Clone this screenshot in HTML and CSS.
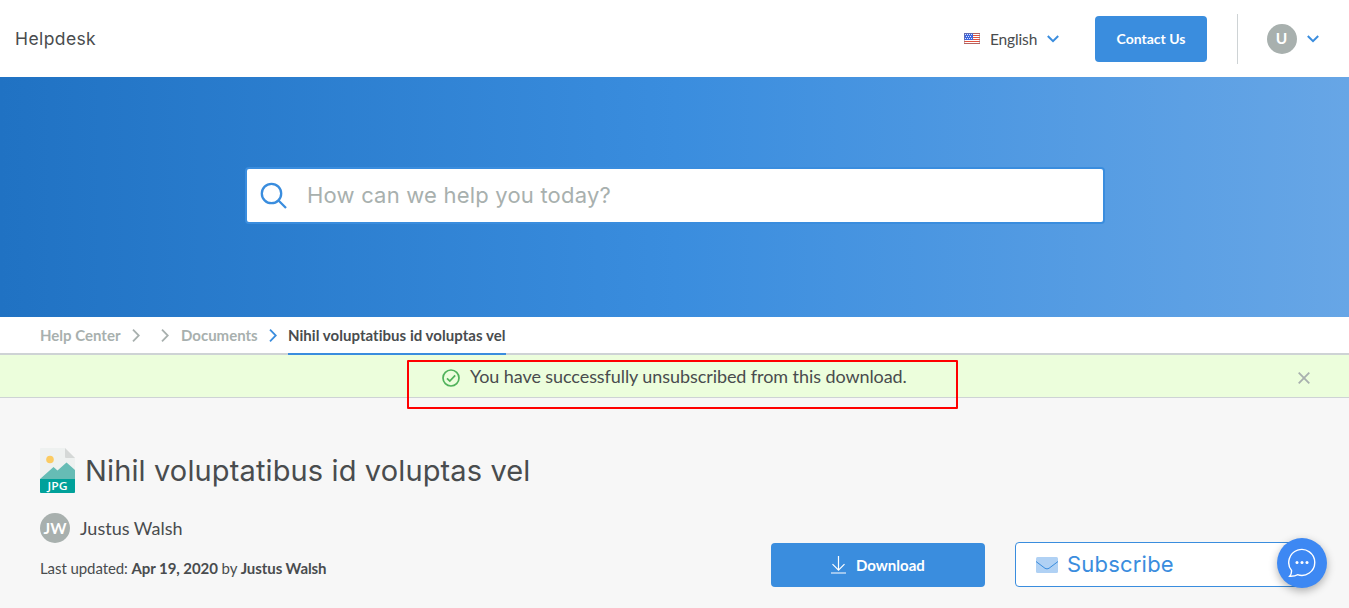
FILE: index.html
```html
<!DOCTYPE html>
<html lang="en">
<head>
<meta charset="utf-8">
<title>Helpdesk</title>
<link rel="stylesheet" href="styles.css">
</head>
<body>
<header class="topbar">
  <div class="brand">Helpdesk</div>
  <nav class="topnav">
    <div class="language">
      <svg class="flag" viewBox="0 0 16 11"><path fill="#fff" d="M0 0h16v11H0z"/><path stroke="#e0523f" d="M0 .5h16M0 2.500h16M0 4.500h16M0 6.500h16M0 8.500h16M0 10.500h16"/><path fill="#3d66df" d="M0 0h9v7H0z"/><path stroke="#dce6ff" stroke-dasharray="1 1" d="M1 1.500h7M2 3.500h6M1 5.500h7"/><path fill="none" stroke="#8c7181" stroke-opacity=".5" d="M.5.5h15v10H.5z"/></svg>
      <span>English</span>
      <svg class="chevron" viewBox="0 0 12 8"><path d="M.8 1 6 6.200 11.200 1"/></svg>
    </div>
    <a class="contact">Contact Us</a>
    <div class="account">
      <span class="avatar user">U</span>
      <svg class="chevron" viewBox="0 0 12 8"><path d="M.8 1 6 6.200 11.200 1"/></svg>
    </div>
  </nav>
</header>
<section class="hero">
  <div class="search">
    <svg class="search-icon" viewBox="0 0 28 28"><circle cx="11.500" cy="11.500" r="9.700"/><path d="m18.500 18.500 7.500 7.500"/></svg>
    <span class="prompt">How can we help you today?</span>
  </div>
</section>
<nav class="crumbs">
  <a class="crumb first">Help Center</a>
  <svg class="sep a" viewBox="0 0 8 13"><path d="m1 .7 5.800 5.800L1 12.300"/></svg>
  <svg class="sep b" viewBox="0 0 8 13"><path d="m1 .7 5.800 5.800L1 12.300"/></svg>
  <a class="crumb second">Documents</a>
  <svg class="sep c" viewBox="0 0 8 13"><path d="m1 .7 5.800 5.800L1 12.300"/></svg>
  <span class="crumb current">Nihil voluptatibus id voluptas vel</span>
</nav>
<div class="notice">
  <svg class="tick" viewBox="0 0 18 18"><circle cx="9" cy="9" r="8"/><path d="m5 9.300 2.800 2.800L13.200 6.300"/></svg>
  <span class="message">You have successfully unsubscribed from this download.</span>
  <svg class="close" viewBox="0 0 12 12"><path d="m.7.7 10.600 10.600M11.300.7.7 11.300"/></svg>
  <div class="highlight"></div>
</div>
<main class="document">
  <div class="heading">
    <svg class="file" viewBox="0 0 35 45"><path fill="#eef1f0" d="M0 1q0-1 1-1h24l10 10v21H0z"/><path fill="#d5d8d7" d="M25 0v9q0 1 1 1h9z"/><circle cx="10" cy="11.500" r="3.800" fill="#fbcb62"/><path fill="#66bcb5" d="m0 31 13.500-12 4 3.500 9-8 8.500 7.500v9z"/><path fill="#00a19a" d="M0 31h35v13q0 1-1 1H1q-1 0-1-1z"/><text class="ext" x="7.500" y="42" textLength="20" lengthAdjust="spacingAndGlyphs">JPG</text></svg>
    <h1>Nihil voluptatibus id voluptas vel</h1>
  </div>
  <div class="lower">
    <div class="meta">
      <div class="author"><span class="avatar initials">JW</span><span class="name">Justus Walsh</span></div>
      <p class="updated">Last updated: <b>Apr 19, 2020</b> by <b>Justus Walsh</b></p>
    </div>
    <a class="download">
      <svg class="down" viewBox="0 0 15 18"><path d="M7.500 0v14M1.500 8.200l6 6 6-6M0 17h15"/></svg>
      <span>Download</span>
    </a>
    <a class="subscribe">
      <svg class="mail" viewBox="0 0 22 16"><rect width="22" height="16" rx="1.500" fill="#b0d1f4"/><path fill="none" stroke="#3a8dde" d="m0 4.500 9 6.800q2 1.200 4 0l9-6.800"/></svg>
      <span>Subscribe</span>
    </a>
  </div>
</main>
<div class="chat">
  <svg class="bubble" viewBox="0 0 28 30"><path d="M1.700 28.300Q3.800 26 3.500 22.400A13 13 0 1 1 9.500 26.700Q7 28.500 1.700 28.300Z"/><g><circle cx="9" cy="14.500" r="1.500"/><circle cx="14" cy="14.500" r="1.500"/><circle cx="19" cy="14.500" r="1.500"/></g></svg>
</div>
</body>
</html>
```
FILE: styles.css
```css
* { box-sizing: border-box; }
body { margin: 0; height: 608px; overflow: hidden; background: #f7f7f7; color: #494c4e; font: 15px/20px Lato, sans-serif; font-variant-ligatures: none; }
svg { display: block; flex: none; }
span, a { white-space: nowrap; }
.topbar { height: 77px; background: #fff; display: flex; justify-content: space-between; align-items: center; padding-left: 15px; }
.brand { font: 17.500px/24px Inter, sans-serif; letter-spacing: .4px; }
.topnav { display: flex; align-items: center; height: 77px; }
.language { display: flex; align-items: center; width: 131px; }
.flag { width: 16px; height: 11px; margin-right: 10px; }
.language span { width: 47px; font-size: 15.500px; letter-spacing: -.15px; padding-top: 1px; }
.chevron { width: 12px; height: 8px; fill: none; stroke: #3a8dde; stroke-width: 2; margin-left: 10px; }
.contact { width: 112px; height: 46px; border-radius: 4px; background: #3a8dde; color: #fff; font-weight: 700; font-size: 14px; display: flex; align-items: center; justify-content: center; }
.account { display: flex; align-items: center; width: 112px; height: 50px; margin-left: 30px; padding-left: 29px; border-left: 1px solid #ced3d5; }
.avatar { display: flex; align-items: center; justify-content: center; width: 30px; height: 30px; border-radius: 50%; background: #a8b0ae; color: #fff; font-weight: 700; font-size: 15.500px; }
.user { padding: 0 1px 1px 0; }
.initials { padding-bottom: 1px; }
.hero { height: 240px; padding-top: 90px; background: linear-gradient(90deg, #2072c3 0%, #3a8dde 50%, #67a6e6 100%); }
.search { width: 860px; height: 57px; margin: 0 auto 0 245px; border: 2px solid #3a8dde; border-radius: 4px; background: #fff; display: flex; align-items: center; padding-left: 13px; }
.search-icon { width: 28px; height: 28px; fill: none; stroke: #3a8dde; stroke-width: 2.300; }
.prompt { font: 22px/30px Inter, sans-serif; letter-spacing: .2px; color: #a8b0ae; margin: -2px 0 0 19px; }
.crumbs { height: 38px; background: #fff; border-bottom: 2px solid #ced3d5; display: flex; align-items: flex-start; padding-left: 40px; }
.crumb { height: 38px; padding-top: 8px; font-weight: 700; color: #a8b0ae; }
.first { width: 81px; }
.second { width: 77px; }
.current { width: 218px; color: #494c4e; border-bottom: 2px solid #3a8dde; letter-spacing: .04px; }
.sep { width: 8px; height: 13px; margin-top: 12px; fill: none; stroke: #a8b0ae; stroke-width: 1.800; }
.a { margin-left: 11px; }
.b { margin: 12px 12px 0 21px; }
.c { margin: 12px 11px 0 11px; stroke: #3a8dde; }
.notice { position: relative; height: 43px; background: #ecfedc; border-bottom: 1px solid #ced3d5; display: flex; align-items: center; padding: 2px 39px 0 442px; }
.tick { width: 18px; height: 18px; fill: none; stroke: #50b25b; stroke-width: 1.700; margin-top: 2px; }
.message { font-size: 18px; line-height: 24px; letter-spacing: -.08px; margin: -3px 0 0 10px; }
.close { width: 12px; height: 12px; margin-left: auto; stroke: #a8b0ae; stroke-width: 1.800; margin-top: 2px; }
.highlight { position: absolute; left: 407px; top: 5px; width: 551px; height: 49px; border: 2px solid #f00; border-radius: 1px; z-index: 2; }
.document { padding: 50px 40px 0; }
.heading { display: flex; height: 45px; }
.file { width: 35px; height: 45px; }
.ext { font: 600 10.500px "Open Sans", sans-serif; fill: #fff; }
h1 { margin: 2px 0 0 10px; font: 29px/42px Inter, sans-serif; letter-spacing: .13px; white-space: nowrap; }
.lower { display: flex; padding-top: 20px; }
.meta { width: 731px; }
.author { display: flex; align-items: center; height: 30px; }
.name { font-size: 18px; margin-left: 10px; }
.updated { margin: 15px 0 0; white-space: nowrap; letter-spacing: -.08px; }
.download { width: 214px; height: 44px; margin-top: 30px; border-radius: 4px; background: #3a8dde; color: #fff; font-weight: 700; display: flex; align-items: center; padding-left: 60px; gap: 10px; }
.down { width: 15px; height: 18px; fill: none; stroke: #fff; stroke-width: 1.200; }
.subscribe { width: 294px; height: 45px; margin: 29px 0 0 30px; border: 1px solid #3a8dde; border-radius: 4px; background: #fff; color: #3a8dde; display: flex; align-items: center; padding-left: 20px; }
.mail { width: 22px; height: 16px; }
.subscribe span { font: 22px/30px Inter, sans-serif; letter-spacing: .2px; margin: -2px 0 0 9px; }
.chat { position: absolute; left: 1277px; top: 538px; width: 50px; height: 50px; border-radius: 50%; background: #3d88f3; box-shadow: 0 3px 8px rgba(0, 0, 0, .3); display: flex; align-items: center; justify-content: center; }
.bubble { width: 28px; height: 30px; fill: none; stroke: #fff; stroke-width: 1.400; }
.bubble g { stroke: none; fill: #fff; }
```
